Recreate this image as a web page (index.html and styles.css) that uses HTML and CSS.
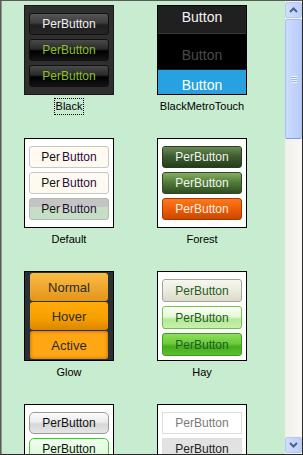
FILE: index.html
```html
<!DOCTYPE html>
<html lang="en">
<head>
    <meta charset="UTF-8">
    <title>Skins</title>
    <link rel="stylesheet" href="styles.css">
</head>
<body>
    <div class="frame">
        <div class="pane">
            <div class="skins">
                <div class="skin">
                    <div class="tile tile-black">
                        <div class="btn black-normal">PerButton</div>
                        <div class="btn black-green">PerButton</div>
                        <div class="btn black-green">PerButton</div>
                    </div>
                    <div class="label focused">Black</div>
                </div>
                <div class="skin">
                    <div class="tile tile-metro">
                        <div class="metro metro-1">Button</div>
                        <div class="metro metro-2">Button</div>
                        <div class="metro metro-3">Button</div>
                    </div>
                    <div class="label">BlackMetroTouch</div>
                </div>
                <div class="skin">
                    <div class="tile tile-white">
                        <div class="btn def">Per <span>Button</span></div>
                        <div class="btn def">Per <span>Button</span></div>
                        <div class="btn def def-pressed">Per <span>Button</span></div>
                    </div>
                    <div class="label">Default</div>
                </div>
                <div class="skin">
                    <div class="tile tile-white">
                        <div class="btn forest-1">PerButton</div>
                        <div class="btn forest-2">PerButton</div>
                        <div class="btn forest-3">PerButton</div>
                    </div>
                    <div class="label">Forest</div>
                </div>
                <div class="skin">
                    <div class="tile tile-glow">
                        <div class="glow glow-normal">Normal</div>
                        <div class="glow glow-hover">Hover</div>
                        <div class="glow glow-active">Active</div>
                    </div>
                    <div class="label">Glow</div>
                </div>
                <div class="skin">
                    <div class="tile tile-white">
                        <div class="btn hay-1">PerButton</div>
                        <div class="btn hay-2">PerButton</div>
                        <div class="btn hay-3">PerButton</div>
                    </div>
                    <div class="label">Hay</div>
                </div>
                <div class="skin">
                    <div class="tile tile-white">
                        <div class="btn office-1">PerButton</div>
                        <div class="btn office-2">PerButton</div>
                    </div>
                </div>
                <div class="skin">
                    <div class="tile tile-white">
                        <div class="btn simple-1">PerButton</div>
                        <div class="btn simple-2">PerButton</div>
                    </div>
                </div>
            </div>
        </div>
        <div class="scrollbar">
            <div class="arrow">
                <svg width="9" height="6" viewBox="0 0 9 6"><path d="M1 5 L4.5 1.5 L8 5" fill="none" stroke="#4d6185" stroke-width="2"/></svg>
            </div>
            <div class="thumb">
                <div class="grip"></div>
            </div>
            <div class="track"></div>
            <div class="arrow">
                <svg width="9" height="6" viewBox="0 0 9 6"><path d="M1 1 L4.5 4.5 L8 1" fill="none" stroke="#4d6185" stroke-width="2"/></svg>
            </div>
        </div>
    </div>
</body>
</html>
```

FILE: styles.css
```css
body {
    margin: 0;
    font-family: "Liberation Sans", Arial, sans-serif;
}
.frame {
    width: 303px;
    height: 455px;
    box-sizing: border-box;
    border: 1px solid #5a5a5a;
    border-bottom-color: #2a2a2a;
    border-right-color: #2a2a2a;
    display: flex;
}
.pane {
    flex: 1;
    background-color: #c8ecd0;
    border-left: 1px solid #8a9a8e;
    overflow: hidden;
}
.skins {
    display: grid;
    grid-template-columns: 133px 133px;
    grid-auto-rows: 133px;
    padding: 4px 0 0 1px;
}
.skin {
    width: 90px;
    margin-left: 21px;
    display: flex;
    flex-direction: column;
    align-items: center;
}
.tile {
    width: 90px;
    height: 90px;
    box-sizing: border-box;
    border: 1px solid #000;
    display: flex;
    flex-direction: column;
    gap: 4px;
    padding: 7px 4px 6px 4px;
}
.label {
    margin-top: 4px;
    font-size: 11px;
    line-height: 15px;
    white-space: nowrap;
    color: #000;
    padding: 0 1px;
}
.label.focused {
    outline: 1px dotted #000;
}
.btn {
    height: 22px;
    flex-shrink: 0;
    box-sizing: border-box;
    border-radius: 3px;
    font-size: 12px;
    display: flex;
    align-items: center;
    justify-content: center;
}

/* Black */
.tile-black {
    background-color: #2f2f2f;
    border-color: #1a1a1a;
}
.black-normal {
    border: 1px solid #111;
    color: #f0f0f0;
    background: linear-gradient(#555 0%, #3c3c3c 45%, #1e1e1e 55%, #262626 100%);
}
.black-green {
    border: 1px solid #111;
    color: #8cc11e;
    background: linear-gradient(#4a4a4a 0%, #2a2a2a 45%, #000 55%, #151515 100%);
}

/* BlackMetroTouch */
.tile-metro {
    padding: 0;
    gap: 0;
    background-color: #000;
}
.metro {
    font-size: 14px;
    display: flex;
    justify-content: center;
}
.metro-1 {
    height: 27px;
    line-height: 22px;
    background-color: #202020;
    color: #f4f4f4;
    border-bottom: 1px solid #383838;
}
.metro-2 {
    height: 35px;
    line-height: 42px;
    background-color: #000;
    color: #4a4a4a;
    border-bottom: 1px solid #202020;
}
.metro-3 {
    flex: 1;
    align-items: flex-end;
    padding-bottom: 1px;
    line-height: 16px;
    background-color: #27a1df;
    color: #fff;
}

/* Default */
.tile-white {
    background-color: #fff;
}
.def {
    border: 1px solid #c4c9c4;
    background-color: #fffaf1;
    color: #111;
    font-size: 12px;
}
.def span {
    color: #2c0a3c;
    margin-left: 2px;
}
.def-pressed {
    border-color: #b0bcb0;
    background: linear-gradient(#c4c4c4 0%, #c4c4c4 38%, #c6dec6 38%, #c6dec6 100%);
}

/* Forest */
.forest-1 {
    border: 1px solid #2a3d22;
    color: #f0f4ee;
    background: linear-gradient(#6b8c58 0%, #3e5e30 45%, #253d1c 100%);
}
.forest-2 {
    border: 1px solid #2f4826;
    color: #f0f4ee;
    background: linear-gradient(#86ad62 0%, #537d3a 45%, #2f4d22 100%);
}
.forest-3 {
    border: 1px solid #a33a00;
    color: #fff0e6;
    background: linear-gradient(#fb7a1e 0%, #ee5d05 50%, #c84800 100%);
}

/* Glow */
.tile-glow {
    background-color: #2a3035;
    padding: 1px 5px;
    gap: 1px;
}
.glow {
    height: 28px;
    box-sizing: border-box;
    border-radius: 3px;
    font-size: 13px;
    color: #2b2b2b;
    display: flex;
    align-items: center;
    justify-content: center;
}
.glow-normal {
    background: linear-gradient(#fbbb45 0%, #eda42c 60%, #e39515 100%);
}
.glow-hover {
    background: linear-gradient(#ffab08 0%, #f59f00 60%, #d88600 100%);
}
.glow-active {
    background-color: #ffa614;
    box-shadow: inset 0 0 3px 1px #d07e00;
}

/* Hay */
.tile-white .hay-1, .tile-white .hay-2, .tile-white .hay-3 {
    height: 23px;
    color: #1e5e1e;
    font-size: 12px;
}
.hay-1 {
    border: 1px solid #a5a597;
    background: linear-gradient(#f8f7ef 0%, #ecebdf 50%, #dbd9c6 100%);
}
.hay-2 {
    border: 1px solid #72c24a;
    background: linear-gradient(#fafff6 0%, #e6f9d8 45%, #b6e897 60%, #c8efae 100%);
}
.hay-3 {
    border: 1px solid #3c9e1e;
    background: linear-gradient(#8ede5c 0%, #6ccb3c 45%, #47ad20 60%, #5bc030 100%);
}

/* Office */
.office-1 {
    border: 1px solid #9a9a9a;
    border-radius: 5px;
    color: #111;
    background: linear-gradient(#fbfbfb 0%, #ececec 45%, #d6d6d6 55%, #e6e6e6 100%);
}
.office-2 {
    border: 1px solid #3ccc30;
    border-radius: 5px;
    color: #111;
    background: linear-gradient(#f0fff0 0%, #d6f7d2 100%);
}

/* Simple */
.simple-1 {
    border: 1px solid #dcdcdc;
    border-radius: 0;
    color: #7a7a7a;
    background-color: #fff;
}
.simple-2 {
    border: 1px solid #e0e0e0;
    border-radius: 0;
    color: #222;
    background-color: #e2e2e2;
}

/* Scrollbar */
.scrollbar {
    width: 17px;
    display: flex;
    flex-direction: column;
    background-color: #f3f1ec;
}
.arrow {
    height: 16px;
    margin: 1px 0;
    box-sizing: border-box;
    border: 1px solid #b7c9f3;
    border-radius: 2px;
    background: linear-gradient(90deg, #d0defd, #bccffb);
    display: flex;
    align-items: center;
    justify-content: center;
}
.thumb {
    height: 120px;
    box-sizing: border-box;
    border: 1px solid #a8bff5;
    border-bottom-color: #7d9de6;
    border-radius: 2px;
    background: linear-gradient(90deg, #cbdbfd, #b9cdfb);
    display: flex;
    align-items: center;
    justify-content: center;
}
.grip {
    width: 6px;
    height: 7px;
    background: repeating-linear-gradient(#eef3fe 0, #eef3fe 1px, #9fb5ea 1px, #9fb5ea 2px);
}
.track {
    flex: 1;
    background: linear-gradient(90deg, #f1efe8, #faf9f5);
}
```
